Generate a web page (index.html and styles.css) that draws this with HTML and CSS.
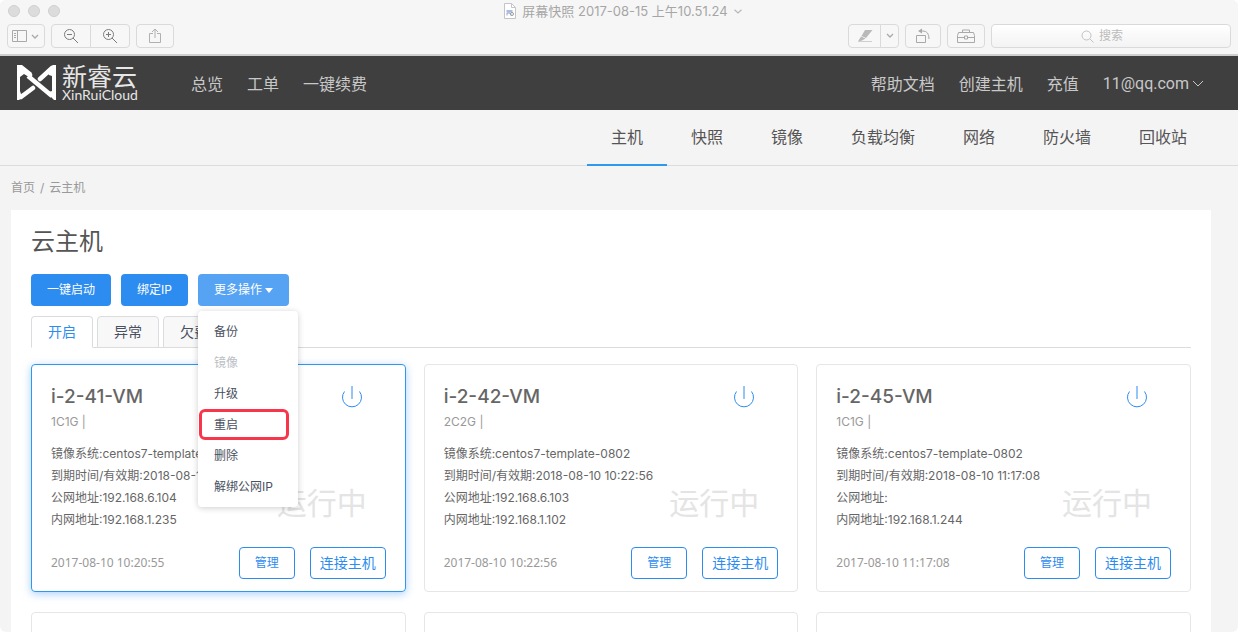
FILE: index.html
```html
<!DOCTYPE html>
<html lang="zh-CN">
<head>
<meta charset="utf-8">
<meta name="viewport" content="width=device-width, initial-scale=1">
<title>屏幕快照 2017-08-15 上午10.51.24</title>
<link rel="stylesheet" href="styles.css">
</head>
<body>
<div class="window">
  <div class="chrome">
    <div class="titlebar">
      <div class="lights"><button aria-label="关闭"></button><button aria-label="最小化"></button><button aria-label="缩放"></button></div>
      <div class="doc-title">
        <svg width="12" height="16" viewBox="0 0 12 16" fill="none"><path d="M.5.5h7l4 4v11H.5z" fill="#fff" stroke="#c4c4c4"/><path d="M7.500.5v4h4" stroke="#c4c4c4"/><path d="M2.500 7h6v2.500h-6z" fill="#a9bbe0"/><path d="M3 12.500V10h3l1 2.500" stroke="#8fa3cf"/><circle cx="8" cy="11" r="1.500" stroke="#9a9a9a"/></svg>
        <span>屏幕快照 2017-08-15 上午10.51.24</span>
        <svg width="8" height="5" viewBox="0 0 8 5" fill="none"><path d="M.5.7 4 4 7.500.7" stroke="#b8b8b8" stroke-width="1.200"/></svg>
      </div>
      <div></div>
    </div>
    <div class="toolbar">
      <button class="tool tool-side" aria-label="边栏">
        <svg width="28" height="14" viewBox="0 0 28 14" fill="none" stroke="#a9a9a9"><path d="M.5 1.500h14v11H.5zM5.500 1.500v11M2 4.500h2M2 6.500h2M2 8.500h2"/><path d="m20 6 3 3 3-3" stroke-width="1.300"/></svg>
      </button>
      <div class="tool-group">
        <button class="tool tool-zoom" aria-label="缩小"><svg width="16" height="16" viewBox="0 0 16 16" fill="none" stroke="#7b7b7b"><circle cx="6.500" cy="6.500" r="5"/><path d="m10 10 5 5M4 6.500h5"/></svg></button>
        <button class="tool tool-zoom" aria-label="放大"><svg width="16" height="16" viewBox="0 0 16 16" fill="none" stroke="#7b7b7b"><circle cx="6.500" cy="6.500" r="5"/><path d="m10 10 5 5M4 6.500h5M6.500 4v5"/></svg></button>
      </div>
      <button class="tool tool-side" aria-label="共享"><svg width="12" height="16" viewBox="0 0 12 16" fill="none" stroke="#b0b0b0"><path d="M4 5.500H.5v9h11v-9H8M6 10V1M3 4l3-3 3 3"/></svg></button>
      <span class="spacer"></span>
      <div class="tool-group">
        <button class="tool tool-pen" aria-label="标记"><svg width="16" height="14" viewBox="0 0 16 14"><path d="M8 1h7.500L9 9 4.500 7zM4 7.500 8.500 9.500 5 11.500 1 12.500z" fill="#b9b9b9"/><path d="M1 12.500h14" stroke="#cfcfcf"/></svg></button>
        <button class="tool tool-more" aria-label="标记选项"><svg width="8" height="6" viewBox="0 0 8 6" fill="none"><path d="m1 1 3 3 3-3" stroke="#a9a9a9" stroke-width="1.300"/></svg></button>
      </div>
      <button class="tool tool-rotate" aria-label="旋转"><svg width="16" height="16" viewBox="0 0 16 16" fill="none" stroke="#a9a9a9"><path d="M1.500 7.500h9v7h-9zM6 3h2q6 0 6 8"/><path d="m7 .5-4 2.500L7 5.500z" fill="#a9a9a9" stroke="none"/></svg></button>
      <button class="tool tool-side" aria-label="工具箱"><svg width="18" height="14" viewBox="0 0 18 14" fill="none" stroke="#a9a9a9"><path d="M1.500 3.500h15l1 3v7H.5v-7zM5.500 3.500V1h7v2.500M.5 8.500H7m4 0h6.500M7.500 7h3v3h-3z"/></svg></button>
      <label class="search">
        <svg width="13" height="13" viewBox="0 0 13 13" fill="none" stroke="#c2c2c2"><circle cx="5.500" cy="5.500" r="4.500"/><path d="m9 9 3.500 3.500"/></svg>
        <input type="search" placeholder="搜索" aria-label="搜索">
      </label>
    </div>
  </div>

  <header class="site-header">
    <a class="logo" href="#">
      <svg width="40" height="36" viewBox="0 0 40 36" fill="none"><path fill="#fff" d="M0 0h5l10 8-3 4-5-3-4 3v14l1 3 4-1 2 1-8 6H0zM39 0h-3l-7 6 3 4 3 1v15l-3 1 1 4 4 4h2z"/><g stroke="#fff" stroke-width="4.500" stroke-linecap="round"><path d="M4 3 13 10"/><path d="m11 11 24 20" stroke-linecap="butt"/><path d="m4 32 12-9M35 3 23 14"/></g></svg>
      <span class="brand"><span class="brand-cn">新睿云</span><span class="brand-en">XinRuiCloud</span></span>
    </a>
    <nav class="links"><a href="#">总览</a><a href="#">工单</a><a href="#">一键续费</a></nav>
    <nav class="links links-right"><a href="#">帮助文档</a><a href="#">创建主机</a><a href="#">充值</a><a href="#" class="account">11@qq.com<svg width="12" height="8" viewBox="0 0 12 8" fill="none"><path d="m1 1 5 5 5-5" stroke="#c8c8c8"/></svg></a></nav>
  </header>

  <nav class="subnav"><a class="active" href="#">主机</a><a href="#">快照</a><a href="#">镜像</a><a href="#">负载均衡</a><a href="#">网络</a><a href="#">防火墙</a><a href="#">回收站</a></nav>

  <div class="breadcrumb"><a href="#">首页</a><span>/</span><span>云主机</span></div>

  <main class="panel">
    <h1>云主机</h1>
    <div class="actions">
      <button class="btn">一键启动</button>
      <button class="btn">绑定IP</button>
      <div class="dropdown">
        <button class="btn btn-open" aria-expanded="true">更多操作<svg width="8" height="5" viewBox="0 0 8 5"><path d="M0 0h8L4 5z" fill="#fff"/></svg></button>
        <div class="menu">
          <button>备份</button>
          <button disabled>镜像</button>
          <button>升级</button>
          <button class="marked">重启</button>
          <button>删除</button>
          <button>解绑公网IP</button>
        </div>
      </div>
    </div>
    <div class="tabs"><button class="tab current">开启</button><button class="tab">异常</button><button class="tab">欠费</button></div>

    <section class="cards">
      <article class="card selected">
        <div class="card-head"><h2>i-2-41-VM</h2><button class="power" aria-label="电源"><svg width="20" height="22" viewBox="0 0 20 22" fill="none" stroke="#2d8cf0"><path d="M10 0v13M2.500 5.500a9.500 9.500 0 1 0 15 0"/></svg></button></div>
        <p class="spec">1C1G |</p>
        <div class="details">
          <ul><li>镜像系统:centos7-template-0802</li><li>到期时间/有效期:2018-08-10 10:20:55</li><li>公网地址:192.168.6.104</li><li>内网地址:192.168.1.235</li></ul>
          <span class="status">运行中</span>
        </div>
        <div class="card-foot"><time>2017-08-10 10:20:55</time><button class="small">管理</button><button>连接主机</button></div>
      </article>
      <article class="card">
        <div class="card-head"><h2>i-2-42-VM</h2><button class="power" aria-label="电源"><svg width="20" height="22" viewBox="0 0 20 22" fill="none" stroke="#2d8cf0"><path d="M10 0v13M2.500 5.500a9.500 9.500 0 1 0 15 0"/></svg></button></div>
        <p class="spec">2C2G |</p>
        <div class="details">
          <ul><li>镜像系统:centos7-template-0802</li><li>到期时间/有效期:2018-08-10 10:22:56</li><li>公网地址:192.168.6.103</li><li>内网地址:192.168.1.102</li></ul>
          <span class="status">运行中</span>
        </div>
        <div class="card-foot"><time>2017-08-10 10:22:56</time><button class="small">管理</button><button>连接主机</button></div>
      </article>
      <article class="card">
        <div class="card-head"><h2>i-2-45-VM</h2><button class="power" aria-label="电源"><svg width="20" height="22" viewBox="0 0 20 22" fill="none" stroke="#2d8cf0"><path d="M10 0v13M2.500 5.500a9.500 9.500 0 1 0 15 0"/></svg></button></div>
        <p class="spec">1C1G |</p>
        <div class="details">
          <ul><li>镜像系统:centos7-template-0802</li><li>到期时间/有效期:2018-08-10 11:17:08</li><li>公网地址:</li><li>内网地址:192.168.1.244</li></ul>
          <span class="status">运行中</span>
        </div>
        <div class="card-foot"><time>2017-08-10 11:17:08</time><button class="small">管理</button><button>连接主机</button></div>
      </article>
      <article class="card blank"></article>
      <article class="card blank"></article>
      <article class="card blank"></article>
    </section>
  </main>
</div>
</body>
</html>
```

FILE: styles.css
```css
* { box-sizing: border-box; }
body { margin: 0; background: #fff; font: 12px/18px Inter, "Noto Sans CJK SC", sans-serif; color: #666; }
button, input { font: inherit; color: inherit; margin: 0; }
button { padding: 0; border: 0; background: none; white-space: nowrap; }
svg { display: block; flex: none; }
a { color: inherit; text-decoration: none; }
h1, h2, p, ul { margin: 0; padding: 0; font-weight: 400; }
ul { list-style: none; }

.window { display: flex; flex-direction: column; height: 100vh; overflow: hidden; border-radius: 6px; background: #f4f4f4; }
.window > * { flex: none; }

.chrome { background: #f6f6f6; border-bottom: 2px solid #cfcfcf; }
.titlebar { display: grid; grid-template-columns: 1fr auto 1fr; align-items: center; height: 22px; padding: 0 0 0 8px; }
.lights { display: flex; gap: 8px; }
.lights button { width: 12px; height: 12px; border-radius: 50%; background: #dcdcdc; border: 1px solid #cfcfcf; }
.doc-title { display: flex; align-items: center; gap: 6px; font-size: 13px; color: #a6a6a6; }
.toolbar { display: flex; gap: 6px; padding: 2px 7px 6px; }
.tool { display: flex; align-items: center; justify-content: center; height: 24px; border: 1px solid #dadada; border-radius: 4px; background: #f7f7f7; }
.tool-side { width: 38px; }
.tool-zoom { width: 40px; }
.tool-pen { width: 33px; }
.tool-more { width: 19px; }
.tool-rotate { width: 36px; }
.tool-group { display: flex; }
.tool-group .tool:first-child { border-radius: 4px 0 0 4px; }
.tool-group .tool:last-child { border-radius: 0 4px 4px 0; margin-left: -1px; }
.spacer { flex: 1; }
.search { display: flex; align-items: center; justify-content: center; gap: 5px; width: 240px; height: 24px; border: 1px solid #dadada; border-radius: 4px; background: linear-gradient(#fff, #f3f3f3); }
.search input { width: 42px; padding: 0; border: 0; outline: 0; background: none; }
.search input::placeholder { color: #bcbcbc; }

.site-header { display: flex; align-items: center; height: 54px; padding: 0 34px 0 17px; background: #3f3f3f; color: #c8c8c8; font-size: 16px; line-height: 24px; }
.logo { display: flex; align-items: center; gap: 5px; width: 174px; color: #e6e6e6; }
.brand { display: flex; flex-direction: column; }
.brand-cn { font-size: 25px; line-height: 24px; }
.brand-en { font: 14px/12px Lato, sans-serif; }
.links { display: flex; gap: 24px; padding-top: 2px; }
.links-right { margin-left: auto; }
.account { display: flex; align-items: center; gap: 3px; font-family: Roboto, sans-serif; }

.subnav { display: flex; justify-content: flex-end; height: 56px; padding: 0 27px; border-bottom: 1px solid #dadcde; font-size: 16px; line-height: 54px; color: #555; }
.subnav a { padding: 0 24px; height: 56px; }
.subnav .active { border-bottom: 2px solid #2d98ec; }

.breadcrumb { display: flex; gap: 5px; padding: 13px 11px; color: #999; }

.panel { margin: 0 27px 0 11px; padding: 16px 20px; background: #fff; }
h1 { font-size: 24px; line-height: 32px; color: #555; }
.actions { display: flex; gap: 10px; margin-top: 16px; }
.btn { display: flex; align-items: center; gap: 3px; height: 32px; padding: 0 16px; border-radius: 4px; background: #2d8cf0; color: #fff; }
.btn-open { background: #57a3f3; }
.dropdown { position: relative; }
.menu { position: absolute; z-index: 2; top: 37px; left: 0; width: 100px; padding: 5px 0; border-radius: 4px; background: #fff; box-shadow: 0 1px 6px rgba(0, 0, 0, .2); color: #495060; }
.menu button { display: block; width: 100%; height: 31px; padding-left: 16px; text-align: left; }
.menu button:disabled { color: #bbbec4; }
.menu .marked { width: 90px; margin-left: 1px; padding-left: 12px; border: 3px solid #f8354a; border-radius: 6px; }

.tabs { display: flex; gap: 4px; margin-top: 10px; border-bottom: 1px solid #dadcde; }
.tab { height: 32px; margin-bottom: -1px; padding: 0 16px; border: 1px solid #dadcde; border-radius: 4px 4px 0 0; background: #f8f8f9; color: #495060; font-size: 14px; }
.tab.current { border-bottom-color: #fff; background: #fff; color: #2d8cf0; }

.cards { display: grid; grid-template-columns: repeat(3, 1fr); gap: 20px 18px; margin-top: 16px; }
.card { min-height: 228px; padding: 20px 19px 12px; border: 1px solid #e6e6e6; border-radius: 4px; }
.card.selected { border-color: #2d98ec; box-shadow: 0 2px 8px rgba(45, 140, 240, .4); }
.card-head { display: flex; justify-content: space-between; align-items: center; padding-right: 24px; }
h2 { font-size: 19px; line-height: 24px; font-weight: 500; }
.spec { margin-top: 4px; color: #999; }
.details { display: flex; justify-content: space-between; align-items: flex-end; margin-top: 12px; padding-right: 19px; line-height: 22px; }
.details ul { white-space: nowrap; }
.status { width: 90px; margin-left: -8px; padding-bottom: 11px; font-size: 30px; line-height: 34px; color: #e4e4e4; }
.card-foot { display: flex; align-items: center; margin-top: 16px; }
.card-foot time { margin-right: auto; font-family: "Noto Sans", sans-serif; color: #999; }
.card-foot button { width: 76px; height: 32px; margin-left: 15px; border: 1px solid #2d8cf0; border-radius: 4px; color: #2d8cf0; font-size: 14px; }
.card-foot .small { width: 56px; font-size: 12px; }
```
